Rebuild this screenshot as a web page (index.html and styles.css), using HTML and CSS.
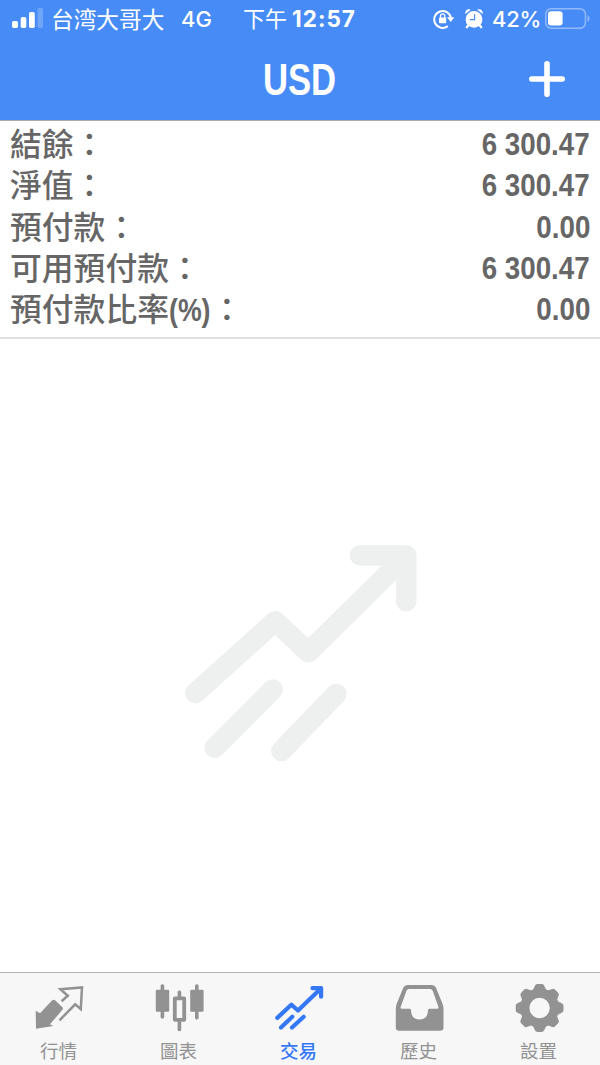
FILE: index.html
```
<!DOCTYPE html>
<html lang="zh-Hant">
<head>
  <meta charset="utf-8">
  <title>USD</title>
  <link rel="stylesheet" href="styles.css">
</head>
<body>
  <header class="header">
    <div class="status">
      <svg class="signal" width="31" height="20" viewBox="0 0 31 20" fill="#fff">
        <rect x="0" y="13" width="6" height="7" rx="1.8"/>
        <rect x="8.7" y="9" width="5.6" height="11" rx="1.8"/>
        <rect x="17" y="4" width="5.8" height="16" rx="1.8"/>
        <rect x="25.5" y="0" width="5.5" height="20" rx="1.8" opacity=".22"/>
      </svg>
      <span class="carrier">台湾大哥大</span>
      <span class="network">4G</span>
      <span class="time">下午<b>12:57</b></span>
      <svg class="lock" width="22" height="20" viewBox="0 0 22 20" fill="none" stroke="#fff" stroke-width="2">
        <path d="M14.8 17.1A8.4 8.4 0 1 1 17.9 9"/>
        <path d="M14 8.2h7.4l-3.7 4.8z" fill="#fff" stroke="none"/>
        <rect x="6" y="8.6" width="7.2" height="5.6" rx=".8" fill="#fff" stroke="none"/>
        <path d="M7.5 9V6.9a2.1 2.1 0 0 1 4.2 0V9" stroke-width="1.3"/>
      </svg>
      <svg class="alarm" width="18" height="20" viewBox="0 0 18 20" fill="#fff">
        <circle cx="9" cy="10.4" r="8.4"/>
        <path d="M.3 4.9C-.4 1.4 2.8-.8 5.7.7zM17.7 4.9c.7-3.5-2.5-5.7-5.4-4.2z"/>
        <path d="M3.8 15.8l-2 2.4M14.2 15.8l2 2.4" stroke="#fff" stroke-width="2.4" stroke-linecap="round"/>
        <path d="M9.6 5.3v5.3H4.9" fill="none" stroke="#478cf6" stroke-width="1.2"/>
      </svg>
      <span class="percent">42%</span>
      <svg class="battery" width="45" height="21" viewBox="0 0 45 21">
        <rect x=".8" y=".8" width="39.6" height="19.4" rx="5.3" fill="none" stroke="#fff" stroke-width="1.5" opacity=".4"/>
        <rect x="3" y="3.2" width="14.6" height="14.2" rx="3" fill="#fff"/>
        <path d="M42.5 7v7q2-1 2-3.5t-2-3.5z" fill="#fff" opacity=".4"/>
      </svg>
    </div>
    <div class="navbar">
      <h1 class="title">USD</h1>
      <svg class="add" width="36" height="36" viewBox="0 0 36 36" stroke="#fff" stroke-width="5.6" stroke-linecap="round">
        <path d="M2.8 18h30.4M18 2.8v30.4"/>
      </svg>
    </div>
  </header>

  <dl class="summary">
    <div class="row"><dt>結餘：</dt><dd>6 300.47</dd></div>
    <div class="row"><dt>淨值：</dt><dd>6 300.47</dd></div>
    <div class="row"><dt>預付款：</dt><dd>0.00</dd></div>
    <div class="row"><dt>可用預付款：</dt><dd>6 300.47</dd></div>
    <div class="row"><dt>預付款比率<span class="unit">(%)</span>：</dt><dd>0.00</dd></div>
  </dl>

  <main class="empty">
    <svg width="232" height="217" viewBox="0 0 232 217" fill="none" stroke="#eef0f0" stroke-width="20.6" stroke-linecap="round" stroke-linejoin="round">
      <path d="M10.3 148.2L90.3 76.2L123.3 107.3L219 13"/>
      <path d="M175 10.5h46.2v45.7"/>
      <path d="M29.7 202.8L87.7 144.6M96.3 206L151.3 149"/>
    </svg>
  </main>

  <nav class="tabs">
    <a class="tab">
      <svg width="56" height="50" viewBox="0 0 56 50">
        <path d="M3.7 27.7L8 30.3L20 17.6Q21.6 16 23.4 17.4L30.7 24.4Q31.4 25.6 30.4 26.8L18 41.3L21.3 43L4 45.7z" fill="#929292"/>
        <path d="M29.6 18.2L35.8 12.7L28.4 6.2L50 4.4L48.8 26.2L43.2 21.3L27.5 37.3" fill="none" stroke="#929292" stroke-width="2.5"/>
      </svg>
      <span>行情</span>
    </a>
    <a class="tab">
      <svg width="56" height="50" viewBox="0 0 56 50" fill="#929292">
        <rect x="3.8" y="6.8" width="13.4" height="22" rx="1.4"/>
        <rect x="8.6" y="1.2" width="3.6" height="34.4" rx="1.6"/>
        <rect x="25.6" y="7.6" width="3.6" height="8" rx="1.6"/>
        <rect x="25.6" y="36" width="3.6" height="12.2" rx="1.6"/>
        <rect x="22.8" y="15.4" width="9.4" height="21.4" fill="none" stroke="#929292" stroke-width="3.8" stroke-linejoin="round"/>
        <rect x="38.2" y="6.8" width="13.4" height="22" rx="1.4"/>
        <rect x="43" y="1.2" width="3.6" height="35.2" rx="1.6"/>
      </svg>
      <span>圖表</span>
    </a>
    <a class="tab active">
      <svg width="56" height="50" viewBox="0 0 56 50" fill="none" stroke="#3478f6" stroke-width="4.2" stroke-linecap="round" stroke-linejoin="round">
        <path d="M5.3 34.9L19.3 21.7L26 27.5L48.8 5.4"/>
        <path d="M40.5 5.2h8.6v8.5"/>
        <path d="M9 44.5L20.3 33.8M20 44.5L31.7 33.8"/>
      </svg>
      <span>交易</span>
    </a>
    <a class="tab">
      <svg width="56" height="50" viewBox="0 0 56 50">
        <path fill="#929292" fill-rule="evenodd" d="M15.5 2H39.8Q42.8 2 43.9 4.5L50.2 20Q51.5 23 51.5 26V44.5Q51.5 47.8 48.2 47.8H7.2Q3.8 47.8 3.8 44.5V26Q3.8 23 5 20L11.4 4.5Q12.5 2 15.5 2zM17 6Q15.2 6 14.5 7.8L8.7 23.8Q8.2 25.8 9.8 25.8H17.6Q19.1 25.8 19.1 27.5C19.1 33.5 22 36.4 27.5 36.4C33 36.4 35.9 33.5 35.9 27.5Q35.9 25.8 37.4 25.8H45.2Q46.8 25.8 46.4 23.8L40.7 7.8Q40 6 38.2 6z"/>
      </svg>
      <span>歷史</span>
    </a>
    <a class="tab">
      <svg width="56" height="50" viewBox="0 0 56 50">
        <g transform="translate(27.6 25)" fill="#929292">
          <circle r="14.8" fill="none" stroke="#929292" stroke-width="9.2"/>
          <path id="tooth" d="M-7.4-17.5C-6-19-5.6-20-5-21.6Q-4.2-23.9-2.2-23.9H2.2Q4.2-23.9 5-21.6C5.6-20 6-19 7.4-17.5z"/>
          <use href="#tooth" transform="rotate(45)"/>
          <use href="#tooth" transform="rotate(90)"/>
          <use href="#tooth" transform="rotate(135)"/>
          <use href="#tooth" transform="rotate(180)"/>
          <use href="#tooth" transform="rotate(225)"/>
          <use href="#tooth" transform="rotate(270)"/>
          <use href="#tooth" transform="rotate(315)"/>
        </g>
      </svg>
      <span>設置</span>
    </a>
  </nav>
</body>
</html>
```
FILE: styles.css
```
* { box-sizing: border-box; }
body {
  margin: 0;
  height: 1065px;
  display: flex;
  flex-direction: column;
  overflow: hidden;
  background: #fff;
  font-family: "Liberation Sans", "Noto Sans CJK TC", sans-serif;
}
svg { display: block; flex: none; }

/* header */
.header { height: 121px; background: #478cf6; border-bottom: 1px solid #a9abb0; color: #fff; }
.status {
  height: 38px;
  padding-left: 12px;
  display: flex;
  align-items: center;
  font: 500 22px/38px Inter, "Noto Sans CJK TC", sans-serif;
  white-space: nowrap;
}
.signal { margin-bottom: 2px; }
.carrier { width: 121px; margin-left: 8px; font-size: 22.7px; font-weight: 400; font-family: "Noto Sans CJK SC", sans-serif; }
.network { width: 62px; margin-left: 9px; }
.time { width: 188px; font-weight: 400; }
.time b { font-weight: 700; font-size: 22.5px; letter-spacing: 1px; margin-left: 5px; }
.lock { margin-left: 2px; }
.alarm { margin-left: 10px; }
.percent { width: 53px; margin-left: 9px; letter-spacing: -.3px; }
.battery { margin-bottom: 1px; }

.navbar { height: 82px; display: grid; grid-template-columns: 1fr auto 1fr; align-items: center; padding: 0 35px 0 34px; }
.title { grid-column: 2; margin: 2px 0 0; font-size: 45px; line-height: 50px; transform: scaleX(.77); }
.add { justify-self: end; }

/* account summary */
.summary { margin: 0; height: 218px; padding: 3px 10px 0; border-bottom: 2px solid #dedfe0; color: #666; }
.row { display: flex; justify-content: space-between; height: 41.3px; line-height: 41.3px; white-space: nowrap; }
dt { margin-top: -2px; font: 500 31.8px/41.3px "Noto Sans CJK TC", sans-serif; }
dd { margin: 0; font-size: 31.5px; font-weight: bold; transform: scaleX(.88); transform-origin: right; }
.unit { display: inline-block; width: 42px; font: bold 31px/30px "Liberation Sans", sans-serif; transform: scaleX(.86); transform-origin: left; }

.empty { flex: 1; display: flex; align-items: center; justify-content: center; padding: 0 0 4px 2px; }

/* tab bar */
.tabs { height: 93px; display: flex; background: #f7f7f7; border-top: 1px solid #b4b4b4; }
.tab { flex: 1; display: flex; flex-direction: column; align-items: center; padding-top: 10px; color: #929292; }
.tab span { font: 18.5px/32px "Noto Sans CJK TC", sans-serif; margin: 1px 3px 0 0; }
.active { color: #3478f6; }
.tab.active span { font-weight: 500; }
```
